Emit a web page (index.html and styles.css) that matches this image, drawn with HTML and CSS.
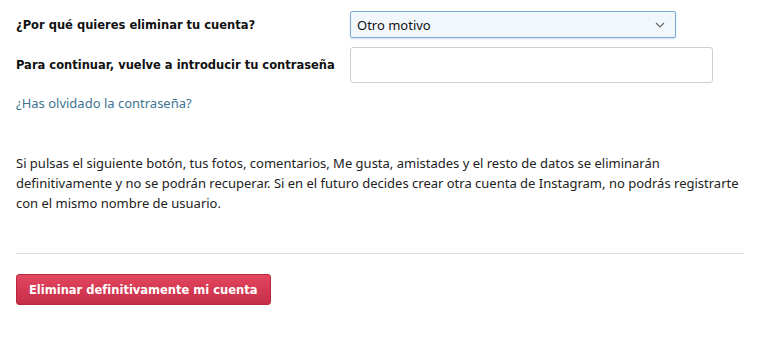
FILE: index.html
```html
<!DOCTYPE html>
<html lang="es">
<head>
<meta charset="utf-8"/>
<title>Eliminar tu cuenta</title>
<link rel="stylesheet" href="styles.css">
</head>
<body>
<div class="delete-form">
  <div class="form-row">
    <label for="reason">¿Por qué quieres eliminar tu cuenta?</label>
    <div class="select-wrap">
      <select id="reason" class="reason-select">
        <option>Otro motivo</option>
      </select>
      <svg class="chevron" width="10" height="6" viewBox="0 0 10 6"><path d="M1 1l4 4 4-4" fill="none" stroke="#666" stroke-width="1.2"/></svg>
    </div>
  </div>
  <div class="form-row">
    <label for="password">Para continuar, vuelve a introducir tu contraseña</label>
    <input id="password" class="password-input" type="password"/>
  </div>
  <div class="forgot"><a href="#">¿Has olvidado la contraseña?</a></div>

  <p class="warning">Si pulsas el siguiente botón, tus fotos, comentarios, Me gusta, amistades y el resto de datos se eliminarán definitivamente y no se podrán recuperar. Si en el futuro decides crear otra cuenta de Instagram, no podrás registrarte con el mismo nombre de usuario.</p>

  <hr class="divider"/>

  <button class="delete-button">Eliminar definitivamente mi cuenta</button>
</div>
</body>
</html>
```

FILE: styles.css
```css
body {
  margin: 0;
  padding: 11px 36px 0 16px;
  background-color: #ffffff;
  font-family: 'Noto Sans', 'Open Sans', sans-serif;
  font-size: 13px;
  color: #222;
}

.delete-form {
  display: flex;
  flex-direction: column;
}

.form-row {
  display: grid;
  grid-template-columns: 334px auto;
  align-items: center;
  margin-bottom: 9px;
}

label {
  font-family: 'DejaVu Sans', Verdana, sans-serif;
  font-weight: bold;
  font-size: 11.5px;
  color: #111;
}

.select-wrap {
  position: relative;
  width: 326px;
}

.reason-select {
  appearance: none;
  width: 326px;
  height: 27px;
  padding: 0 24px 0 6px;
  border: 1px solid #7eaad8;
  border-radius: 2px;
  background-color: #f2f7fc;
  font-family: 'Noto Sans', sans-serif;
  font-size: 13px;
  color: #111;
  box-shadow: 0 1px 2px rgba(60, 110, 170, 0.25);
}

.chevron {
  position: absolute;
  right: 11px;
  top: 11px;
  pointer-events: none;
}

.password-input {
  width: 363px;
  height: 36px;
  box-sizing: border-box;
  border: 1px solid #cfcfcf;
  border-radius: 3px;
  background: #fff;
}

.forgot {
  margin-top: 2px;
}

.forgot a {
  color: #3d7590;
  text-decoration: none;
  font-size: 13px;
}

.warning {
  margin: 41px 0 0;
  line-height: 20px;
  color: #222;
}

.divider {
  width: 100%;
  margin: 40px 0 20px;
  border: none;
  border-top: 1px solid #dedede;
}

.delete-button {
  align-self: flex-start;
  padding: 0 12px;
  height: 31px;
  border: 1px solid #b8283f;
  border-radius: 3px;
  background: linear-gradient(#e4465f, #c52e47);
  color: #fff;
  font-family: 'DejaVu Sans', Verdana, sans-serif;
  font-weight: bold;
  font-size: 11.5px;
  cursor: pointer;
}
```
